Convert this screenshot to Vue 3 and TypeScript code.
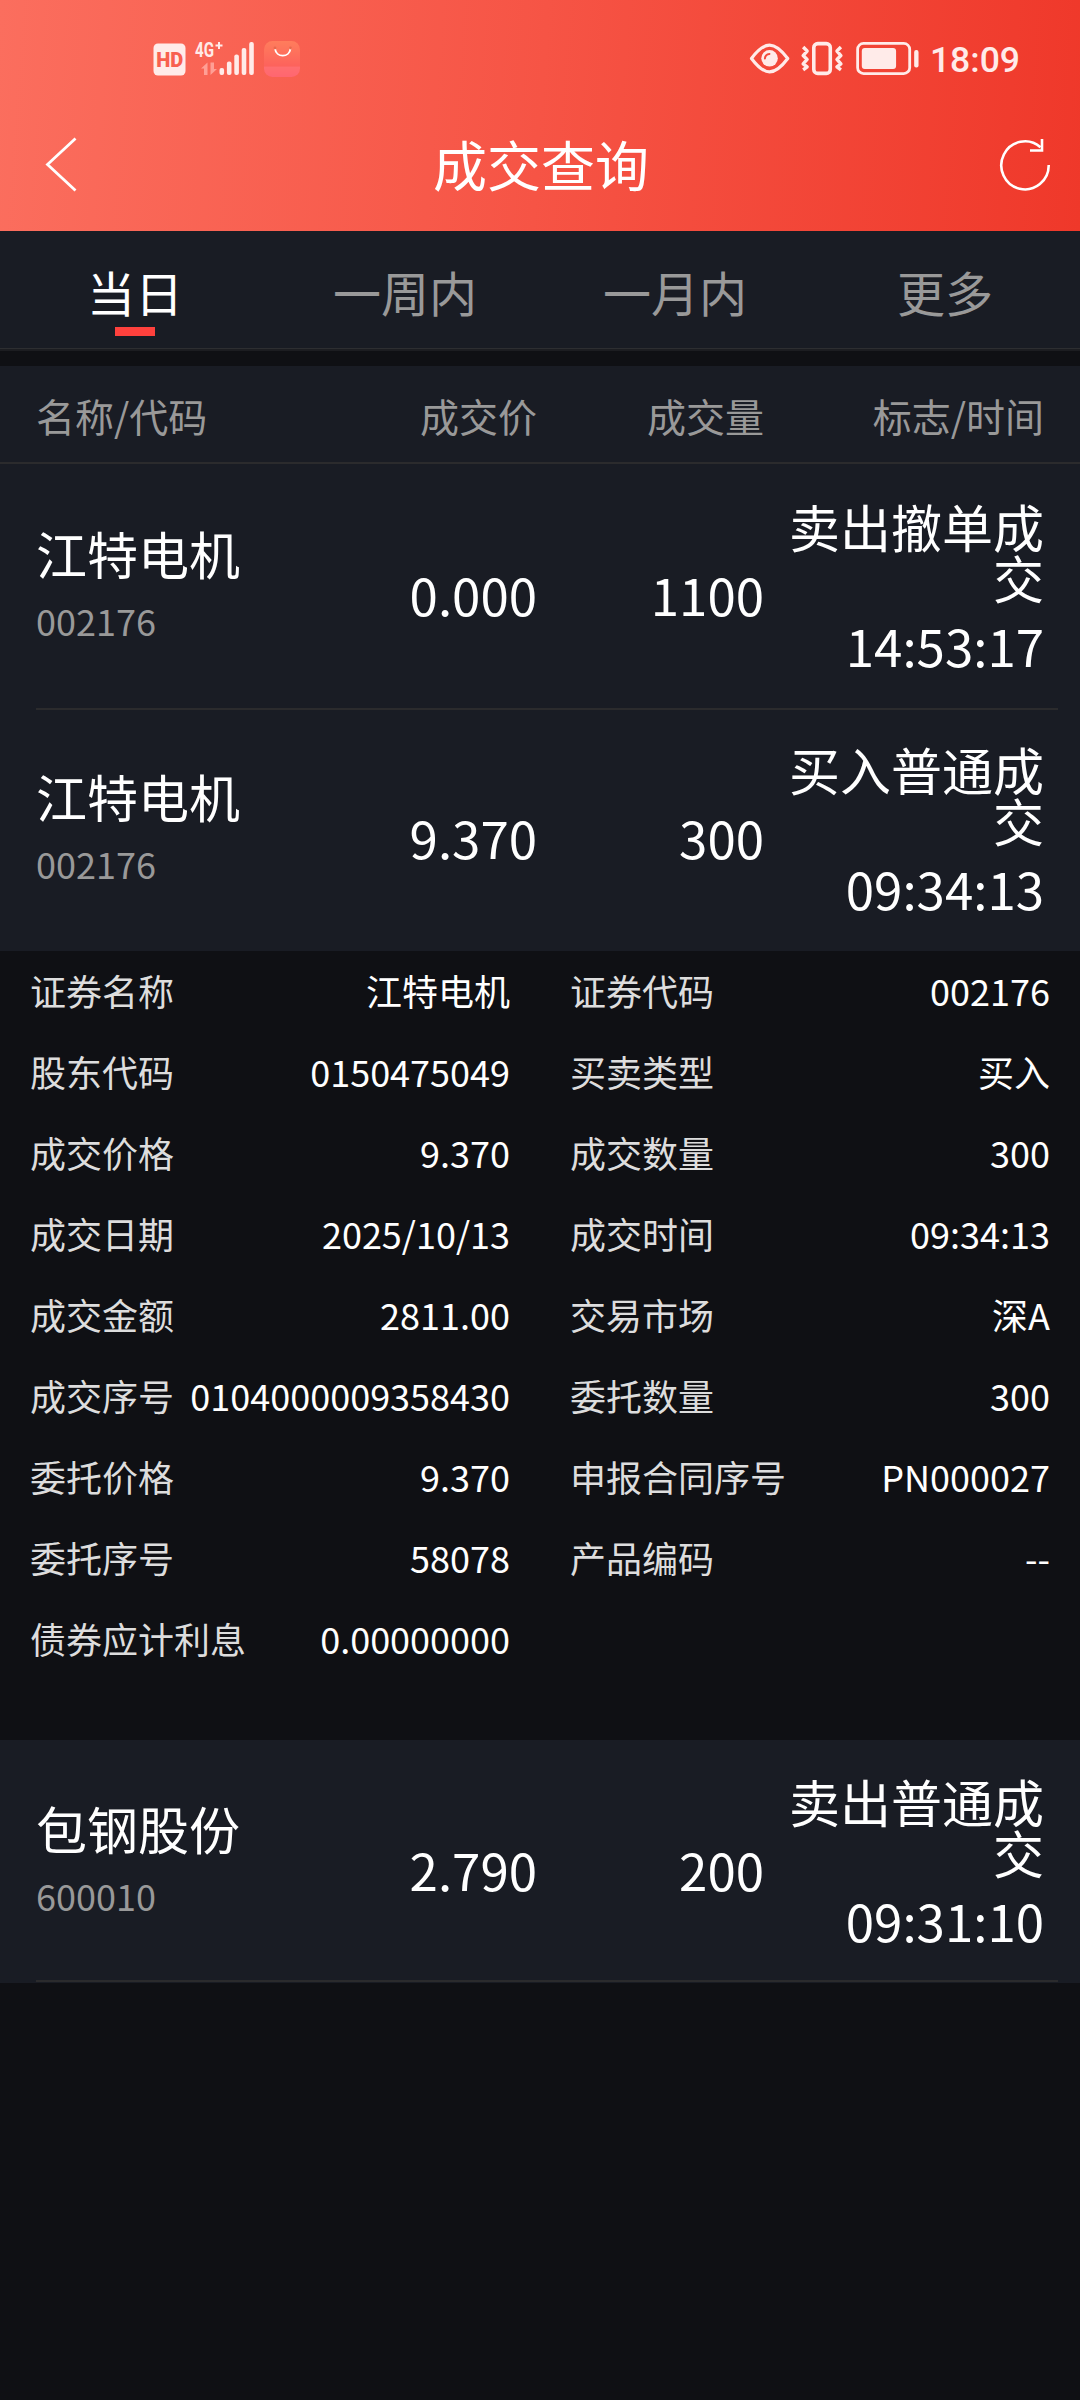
<script setup lang="ts">
interface Trade {
  name: string
  code: string
  price: string
  volume: string
  flag: string
  time: string
  expanded?: boolean
}

const tabs: string[] = ['当日', '一周内', '一月内', '更多']
const columns: string[] = ['名称/代码', '成交价', '成交量', '标志/时间']

const trades: Trade[] = [
  { name: '江特电机', code: '002176', price: '0.000', volume: '1100', flag: '卖出撤单成交', time: '14:53:17' },
  { name: '江特电机', code: '002176', price: '9.370', volume: '300', flag: '买入普通成交', time: '09:34:13', expanded: true },
  { name: '包钢股份', code: '600010', price: '2.790', volume: '200', flag: '卖出普通成交', time: '09:31:10' },
]

const details: [string, string][] = [
  ['证券名称', '江特电机'],
  ['证券代码', '002176'],
  ['股东代码', '0150475049'],
  ['买卖类型', '买入'],
  ['成交价格', '9.370'],
  ['成交数量', '300'],
  ['成交日期', '2025/10/13'],
  ['成交时间', '09:34:13'],
  ['成交金额', '2811.00'],
  ['交易市场', '深A'],
  ['成交序号', '0104000009358430'],
  ['委托数量', '300'],
  ['委托价格', '9.370'],
  ['申报合同序号', 'PN000027'],
  ['委托序号', '58078'],
  ['产品编码', '--'],
  ['债券应计利息', '0.00000000'],
]
</script>

<template>
  <div class="page" lang="zh-CN">
    <header class="top">
      <div class="status">
        <svg class="status-left" width="150" height="40" viewBox="152 38 150 40">
          <defs>
            <linearGradient id="bag" x1="0" y1="0" x2="0" y2="1">
              <stop offset="0" stop-color="#ff7d5c" />
              <stop offset="0.7" stop-color="#fd625c" />
              <stop offset="0.72" stop-color="#ff6e70" />
              <stop offset="1" stop-color="#ff6670" />
            </linearGradient>
          </defs>
          <rect x="153.5" y="43.5" width="32" height="32" rx="4.5" fill="#ffebe9" />
          <text x="169.7" y="66.6" class="hd" text-anchor="middle" textLength="27" lengthAdjust="spacingAndGlyphs">HD</text>
          <text x="195" y="56.5" class="net" textLength="19" lengthAdjust="spacingAndGlyphs">4G</text>
          <path d="M215.500 45.500h7M219 42v7" stroke="#ffebe9" stroke-width="2" fill="none" />
          <g fill="#ff9f95">
            <path d="M201 68.500l6.500-6v12.500h-3.500v-6.500zM217 69l-6.500 6v-12.500h3.500v6.500z" />
          </g>
          <g fill="#ffebe9">
            <rect x="219.500" y="68" width="4.600" height="7" rx="2" />
            <rect x="226.900" y="61.500" width="4.600" height="13.500" rx="2" />
            <rect x="234.300" y="54.500" width="4.600" height="20.500" rx="2" />
            <rect x="241.700" y="48" width="4.600" height="27" rx="2" />
            <rect x="249.200" y="42" width="4.600" height="33" rx="2" />
          </g>
          <rect x="264" y="41" width="36" height="36" rx="8.500" fill="url(#bag)" />
          <path d="M275 48.500c1 9.500 14.500 9.500 15.500 0" fill="none" stroke="#fff" stroke-width="1.900" stroke-linecap="round" />
          <circle cx="275" cy="48" r="1.400" fill="#e8684c" />
          <circle cx="290.500" cy="48" r="1.400" fill="#e8684c" />
        </svg>
        <div class="status-right">
          <svg width="174" height="40" viewBox="748 38 174 40" fill="none" stroke="#ffebe9">
            <path d="M751.500 58.500C759 48.500 764 45 769.700 45S780.500 48.500 788 58.500C780.500 68.500 775.500 72 769.700 72S759 68.500 751.500 58.500z" stroke-width="3.200" stroke-linejoin="round" />
            <circle cx="769.700" cy="58.300" r="8.300" fill="#ffebe9" stroke="none" />
            <path d="M765 58.500c.2-2.800 1.700-4.300 4.600-4.600" stroke="#f4473a" stroke-width="2" stroke-linecap="round" />
            <rect x="814.200" y="43.500" width="16.600" height="30" rx="4" stroke-width="3.600" />
            <path d="M803.500 47l4 4-4 4.500 4 4-4 4.500 4 3-4 3M841.500 47l-4 4 4 4.500-4 4 4 4.500-4 3 4 3" stroke-width="3.400" stroke-linejoin="round" />
            <rect x="858.300" y="43.300" width="52.400" height="30.400" rx="6" stroke-width="2.800" />
            <rect x="862.500" y="48" width="34.500" height="21" rx="3" fill="#ffebe9" stroke="none" />
            <rect x="915.200" y="50" width="4.400" height="17.500" rx="2" fill="#ffebe9" stroke="none" />
          </svg>
          <span class="clock">18:09</span>
        </div>
      </div>
      <div class="nav">
        <svg width="36" height="60" viewBox="0 0 36 60" fill="none" stroke="#fff" stroke-width="2.800">
          <path d="M31.500 4.500L3.500 30.500 31.500 56.500" />
        </svg>
        <h1>成交查询</h1>
        <svg width="56" height="56" viewBox="0 0 56 56" fill="none" stroke="#fff" stroke-width="2.600">
          <path d="M51.700 28A23.700 24 0 1 1 43.500 10.200" />
          <path d="M45 2V13.500H33" />
        </svg>
      </div>
    </header>

    <nav class="tabs">
      <div v-for="(tab, i) in tabs" :key="tab" class="tab" :class="{ active: i === 0 }">
        <span>{{ tab }}</span>
        <i v-if="i === 0" class="marker"></i>
      </div>
    </nav>

    <div class="table-head">
      <span v-for="c in columns" :key="c">{{ c }}</span>
    </div>

    <template v-for="(t, i) in trades" :key="i">
      <section class="trade" :class="'trade-' + i">
        <div class="stock">
          <b>{{ t.name }}</b>
          <small>{{ t.code }}</small>
        </div>
        <div class="num">{{ t.price }}</div>
        <div class="num">{{ t.volume }}</div>
        <div class="flag">
          <p>{{ t.flag }}</p>
          <p>{{ t.time }}</p>
        </div>
      </section>
      <dl v-if="t.expanded" class="details">
        <div v-for="[label, value] in details" :key="label">
          <dt>{{ label }}</dt>
          <dd>{{ value }}</dd>
        </div>
      </dl>
      <div v-else class="divider"></div>
    </template>
  </div>
</template>

<style>
body {
  margin: 0;
  background: #0f1014;
}
</style>

<style scoped>
.page {
  width: 1080px;
  height: 2400px;
  overflow: hidden;
  background: #0f1014;
  color: #fff;
  font-family: "Noto Sans CJK SC", sans-serif;
}
.top {
  height: 231px;
  background: linear-gradient(94deg, #fb6e5e 0%, #f65445 50%, #ef382a 100%);
}
.status {
  height: 100px;
  box-sizing: border-box;
  padding: 38px 60px 0 152px;
  display: flex;
  justify-content: space-between;
  align-items: flex-start;
}
.hd {
  font: 900 21px Roboto, sans-serif;
  fill: #f8604f;
}
.net {
  font: 700 20px Roboto, sans-serif;
  fill: #ffebe9;
}
.status-right {
  display: flex;
  width: 272px;
  gap: 9px;
}
.clock {
  font: 500 35.5px/45px Roboto, sans-serif;
  color: #ffebe9;
}
.nav {
  height: 128px;
  box-sizing: border-box;
  padding: 0 27px 0 44px;
  display: flex;
  align-items: center;
  justify-content: space-between;
}
.nav h1 {
  margin: 0 0 0 5px;
  font-size: 54px;
  font-weight: 400;
  line-height: 54px;
}
.nav svg:last-child {
  margin-top: 1px;
}
.tabs {
  display: flex;
  height: 120px;
  box-sizing: border-box;
  border-bottom: 2px solid #1c1d21;
  box-shadow: inset 0 -1px #2d2e31;
  background: #191c24;
}
.tab {
  flex: 1;
  display: flex;
  flex-direction: column;
  align-items: center;
  padding-top: 36px;
  font-size: 48px;
  line-height: 48px;
  color: #999;
}
.tab.active {
  color: #fff;
}
.marker {
  width: 40px;
  height: 9px;
  margin-top: 12px;
  background: #ff413d;
}
.table-head {
  margin-top: 15px;
  height: 98px;
  box-sizing: border-box;
  padding: 0 36px;
  border-bottom: 2px solid #2b2b2d;
  background: #191c24;
  color: #999;
  font-size: 39px;
  line-height: 98px;
}
.table-head,
.trade {
  display: grid;
  grid-template-columns: 275px 226px 227px 280px;
}
.table-head span:not(:first-child) {
  text-align: right;
}
.trade {
  height: 241px;
  box-sizing: border-box;
  padding: 0 36px;
  background: #191c24;
}
.trade-0 {
  height: 244px;
  padding-top: 1px;
}
.trade-1 > * {
  margin-top: -2px;
}
.trade-2 {
  height: 240px;
}
.stock {
  display: flex;
  flex-direction: column;
  padding-top: 63px;
  gap: 23px;
}
.stock b {
  font-size: 51px;
  font-weight: 400;
  line-height: 51px;
}
.stock small {
  font-size: 36px;
  line-height: 36px;
  color: #999;
}
.num {
  padding-top: 104px;
  font-size: 51px;
  line-height: 51px;
  text-align: right;
}
.flag {
  padding: 36px 0 0 20px;
  font-size: 51px;
  line-height: 51px;
  text-align: right;
}
.flag p {
  margin: 0 0 17px;
}
.divider {
  height: 2px;
  background: linear-gradient(to right, #191c24 36px, #2b2b2d 36px, #2b2b2d 1058px, #191c24 1058px);
}
.trade-2 + .divider {
  border-bottom: 1px solid #191c24;
}
.details {
  height: 789px;
  box-sizing: border-box;
  margin: 0;
  padding: 0 30px;
  display: grid;
  grid-template-columns: 480px 480px;
  column-gap: 60px;
  grid-auto-rows: 81px;
}
.details div {
  display: flex;
  justify-content: space-between;
  font-size: 36px;
  line-height: 79px;
  white-space: nowrap;
}
.details dt {
  color: #ddd;
}
.details dd {
  margin: 0;
}
</style>
